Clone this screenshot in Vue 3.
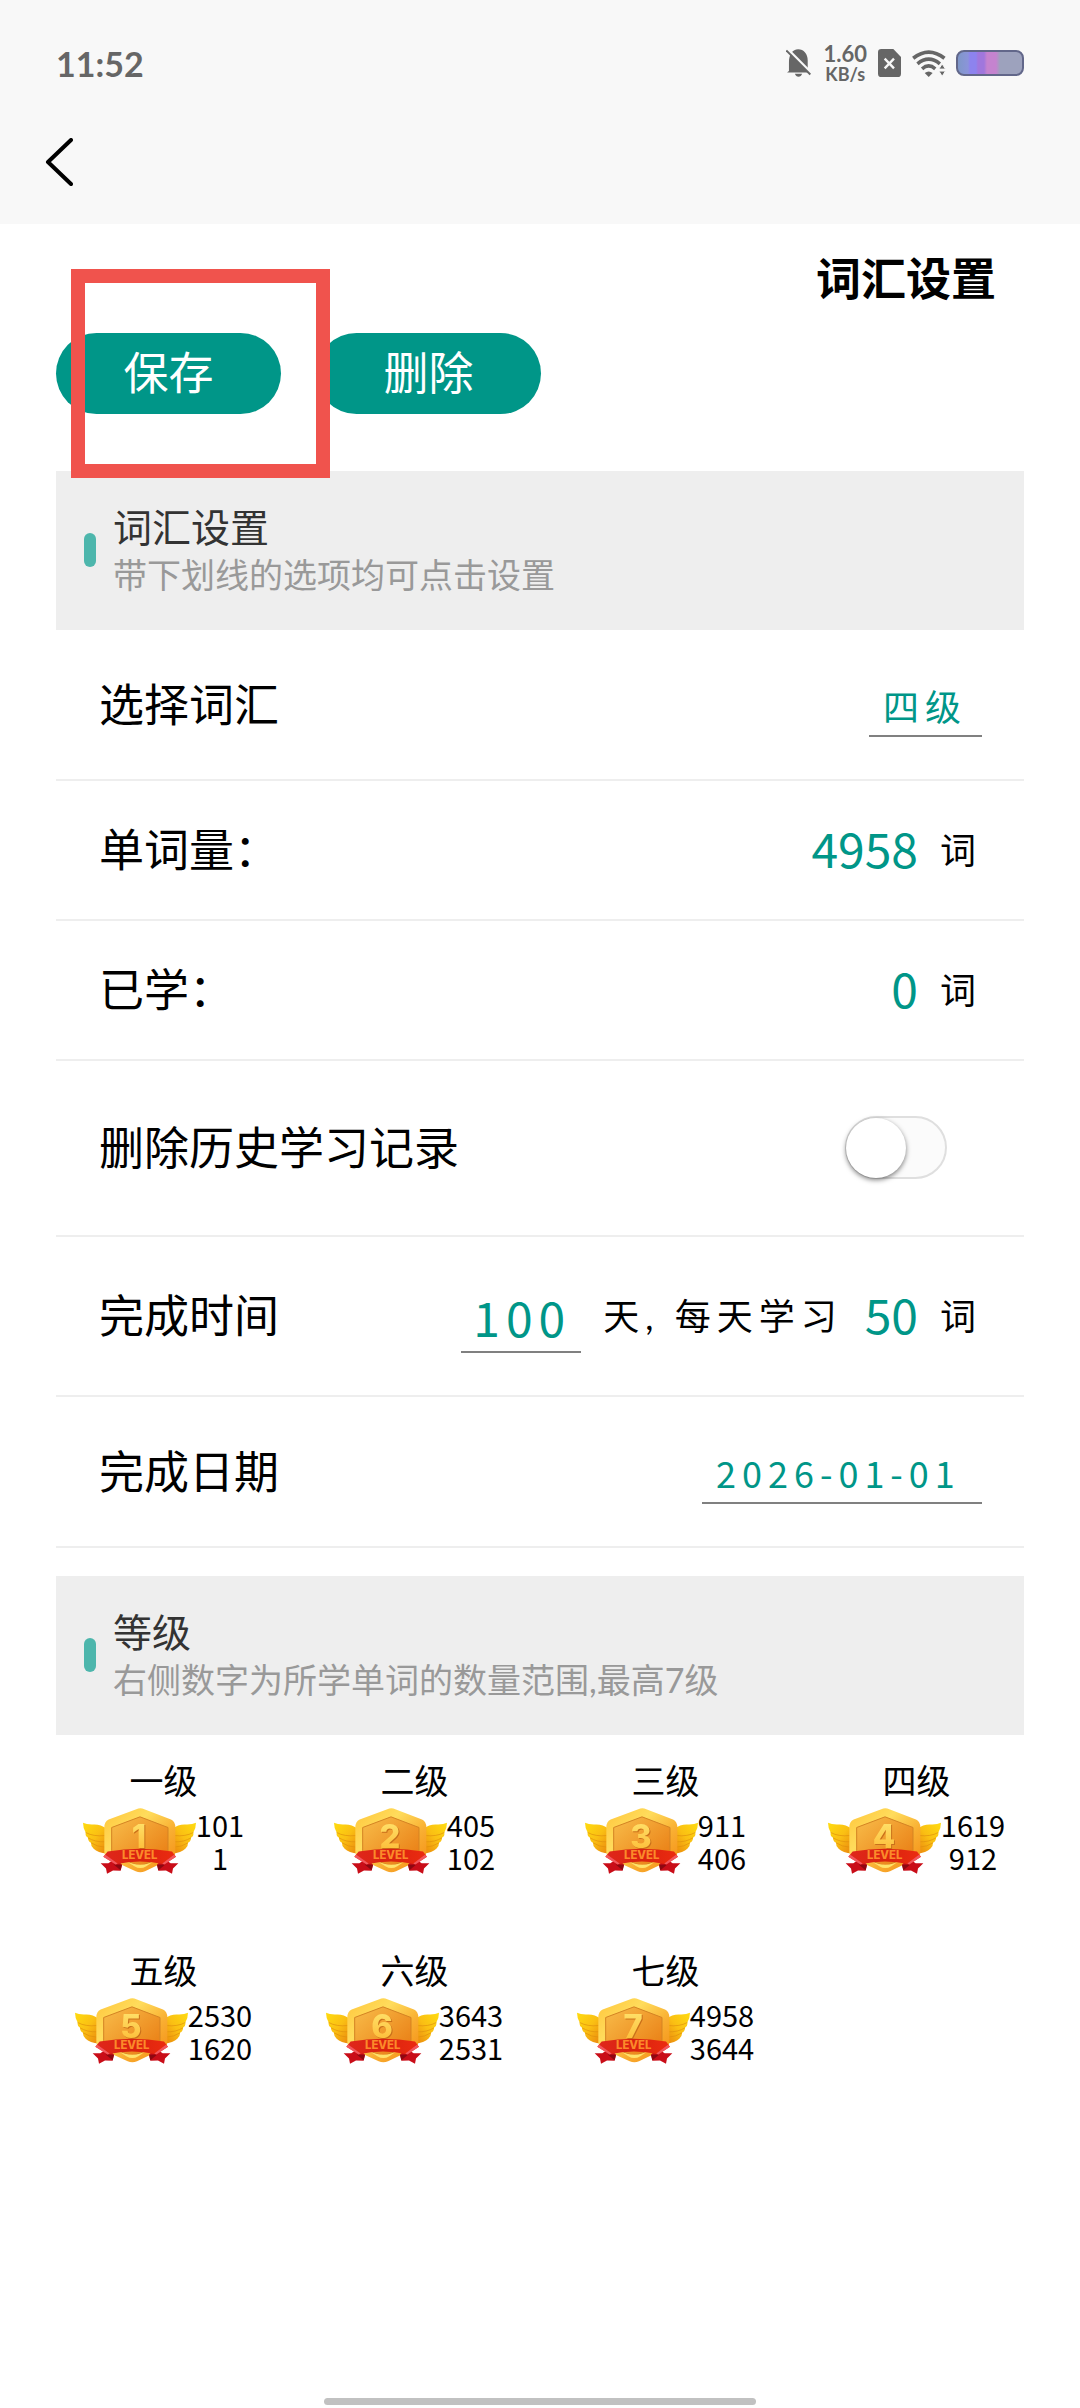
<script setup>
import { ref } from 'vue'

const vocab = ref('四级')
const days = ref('100')
const finishDate = ref('2026-01-01')
const clearHistory = ref(false)
const total = ref(4958)
const learned = ref(0)
const perDay = ref(50)

const levels = [
  { id: 1, name: '一级', max: 101, min: 1 },
  { id: 2, name: '二级', max: 405, min: 102 },
  { id: 3, name: '三级', max: 911, min: 406 },
  { id: 4, name: '四级', max: 1619, min: 912 },
  { id: 5, name: '五级', max: 2530, min: 1620 },
  { id: 6, name: '六级', max: 3643, min: 2531 },
  { id: 7, name: '七级', max: 4958, min: 3644 }
]
</script>

<template>
  <div class="page">
    <header class="top">
      <div class="status">
        <span class="time">11:52</span>
        <div class="status-icons">
          <svg class="bell" viewBox="0 0 76 84">
            <path d="M9 66V40C9 16 20 0 37 0s29 14 29 34v32l6 4v1H4v-1z" fill="#666" />
            <path d="M27 75h22c-2 6-6 9-11 9s-9-3-11-9z" fill="#666" />
            <path d="M5 0l74 74" stroke="#f8f8f8" stroke-width="8" />
            <path d="M1 4l73 73" stroke="#666" stroke-width="6" />
          </svg>
          <div class="speed">
            <span class="speed-num">1.60</span>
            <span class="speed-unit">KB/s</span>
          </div>
          <svg class="sim" viewBox="0 0 69 84">
            <path d="M10 0h36l23 24v50a10 10 0 0 1-10 10H10A10 10 0 0 1 0 74V10A10 10 0 0 1 10 0z" fill="#666" />
            <path d="M20 29l28 29M48 29L20 58" stroke="#f8f8f8" stroke-width="7" />
          </svg>
          <svg class="wifi" viewBox="0 0 102 82">
            <g fill="none" stroke="#666" stroke-width="11">
              <path d="M3 25Q50-12 98 25" />
              <path d="M16 42Q50 14 84 42" />
              <path d="M30 57Q50 40 70 57" />
            </g>
            <path d="M38 70q12-10 24 0L50 82z" fill="#666" />
            <path d="M91 42l10 16H81zM91 80l10-16H81z" fill="#666" stroke="#f8f8f8" stroke-width="3" />
          </svg>
          <div class="battery"></div>
        </div>
      </div>
      <nav class="nav">
        <button class="back" type="button" aria-label="返回">
          <svg viewBox="0 0 28 48">
            <path d="M26 2L3 24l23 22" fill="none" stroke="#000" stroke-width="4" stroke-linecap="round" stroke-linejoin="round" />
          </svg>
        </button>
      </nav>
    </header>

    <main class="content">
      <h1>词汇设置</h1>
      <div class="actions">
        <button type="button">保存</button>
        <button type="button">删除</button>
        <div class="mark"></div>
      </div>

      <section>
        <div class="section-head">
          <i class="pill"></i>
          <div>
            <h2>词汇设置</h2>
            <p>带下划线的选项均可点击设置</p>
          </div>
        </div>
        <div class="row">
          <label for="vocab">选择词汇</label>
          <select id="vocab" v-model="vocab" class="field vocab">
            <option v-for="l in levels" :key="l.id">{{ l.name }}</option>
          </select>
        </div>
        <div class="row">
          <span class="label">单词量：</span>
          <div class="value"><b>{{ total }}</b><span>词</span></div>
        </div>
        <div class="row">
          <span class="label">已学：</span>
          <div class="value"><b>{{ learned }}</b><span>词</span></div>
        </div>
        <div class="row row-switch">
          <label for="clear">删除历史学习记录</label>
          <input id="clear" v-model="clearHistory" class="switch" type="checkbox">
        </div>
        <div class="row">
          <label for="days">完成时间</label>
          <div class="value">
            <input id="days" v-model="days" class="field days" type="text">
            <span>天, 每天学习</span>
            <b>{{ perDay }}</b>
            <span>词</span>
          </div>
        </div>
        <div class="row">
          <label for="date">完成日期</label>
          <input id="date" v-model="finishDate" class="field date" type="text">
        </div>
      </section>

      <section class="grades">
        <div class="section-head">
          <i class="pill"></i>
          <div>
            <h2>等级</h2>
            <p>右侧数字为所学单词的数量范围,最高7级</p>
          </div>
        </div>

        <svg class="defs" aria-hidden="true">
          <defs>
            <linearGradient id="rim" x1="0" y1="0" x2="1" y2="1">
              <stop offset="0" stop-color="#ffc53a" />
              <stop offset=".35" stop-color="#ffdc5c" />
              <stop offset=".65" stop-color="#f9ae31" />
              <stop offset="1" stop-color="#f38b12" />
            </linearGradient>
            <linearGradient id="face" x1="0" y1="0" x2="1" y2="1">
              <stop offset="0" stop-color="#f8bd4a" />
              <stop offset="1" stop-color="#e8780f" />
            </linearGradient>
            <linearGradient id="wing" x1="0" y1="0" x2="1" y2="1">
              <stop offset="0" stop-color="#ffdc10" />
              <stop offset=".5" stop-color="#fabf13" />
              <stop offset="1" stop-color="#e9840c" />
            </linearGradient>
            <linearGradient id="digit" x1="0" y1="0" x2="0" y2="1">
              <stop offset="0" stop-color="#ffe873" />
              <stop offset="1" stop-color="#fdb62f" />
            </linearGradient>
            <linearGradient id="ribbon" x1="0" y1="0" x2="1" y2="0">
              <stop offset="0" stop-color="#e0271c" />
              <stop offset=".5" stop-color="#d9230f" />
              <stop offset="1" stop-color="#ec2b10" />
            </linearGradient>
            <g id="wing-shape">
              <path d="M0 44Q12 50 32 49Q52 48 72 62V136Q44 134 32 122Q23 114 24 104Q15 100 15 89Q6 84 8 73Q0 60 0 44z" fill="url(#wing)" />
              <path d="M8 73Q32 86 66 82M15 89Q36 102 66 101M24 104Q42 116 66 117" fill="none" stroke="#df8d0c" stroke-width="3" opacity=".65" />
            </g>
            <g id="tail-shape">
              <path d="M53 165L76 165L98 150L117 170L113 188L90 187L72 197L69 181z" fill="#c90d18" />
              <path d="M92 169L117 170L113 186z" fill="#8d0812" />
            </g>
          </defs>
        </svg>

        <ul class="levels">
          <li v-for="l in levels" :key="l.id">
            <span class="level-name">{{ l.name }}</span>
            <div class="level-body">
              <svg class="badge" viewBox="0 0 339 197">
                <use href="#wing-shape" />
                <use href="#wing-shape" transform="translate(339 0) scale(-1 1)" />
                <path d="M160 3Q172-3 184 3L264 34Q277 41 277 57V132Q277 145 264 152L186 189Q172 195 158 189L76 152Q64 145 64 132V57Q64 41 77 34z" fill="url(#rim)" />
                <path d="M171 26L255 58V128Q255 140 245 145L171 174L96 145Q86 140 86 128V58z" fill="url(#face)" stroke="#d48323" stroke-width="3" />
                <path d="M128 158Q150 170 172 170Q196 170 214 158L190 174Q172 185 154 174z" fill="#ffe36a" />
                <text x="168" y="120" class="digit">{{ l.id }}</text>
                <use href="#tail-shape" />
                <use href="#tail-shape" transform="translate(339 0) scale(-1 1)" />
                <path d="M74 130Q171 114 267 130L279 146L244 168Q171 152 98 168L61 146z" fill="url(#ribbon)" />
                <path d="M61 146L67 140L104 166L98 169zM279 146L273 140L238 166L244 169z" fill="#f2555c" />
                <text x="170" y="154" class="ribbon-text">LEVEL</text>
              </svg>
              <div class="range">
                <span>{{ l.max }}</span>
                <span>{{ l.min }}</span>
              </div>
            </div>
          </li>
        </ul>
      </section>
    </main>

    <div class="home-bar"></div>
  </div>
</template>

<style>
body {
  margin: 0;
  background: #fff;
}
</style>

<style scoped>
.page {
  min-height: 100vh;
  display: flex;
  flex-direction: column;
  font-family: Lato, "Noto Sans CJK SC", sans-serif;
  color: #000;
  background: #fff;
}
.page * {
  box-sizing: border-box;
}
button, input, select {
  font-family: inherit;
  margin: 0;
}

/* status bar + nav */
.top {
  background: #f8f8f8;
  padding: 0 56px 26px;
}
.status {
  height: 126px;
  display: flex;
  align-items: center;
  justify-content: space-between;
  color: #666;
}
.time {
  font-size: 34px;
  font-weight: 700;
}
.status-icons {
  display: flex;
  align-items: center;
}
.bell {
  width: 25px;
  height: 28px;
  margin-right: 12px;
}
.speed {
  display: flex;
  flex-direction: column;
  align-items: center;
  font-weight: 700;
  margin-right: 11px;
  padding-top: 2px;
}
.speed-num {
  font-size: 22px;
  line-height: 20px;
}
.speed-unit {
  font-size: 18px;
  line-height: 20px;
}
.sim {
  width: 23px;
  height: 28px;
  margin-right: 11px;
}
.wifi {
  width: 34px;
  height: 27px;
  margin-right: 10px;
}
.battery {
  width: 68px;
  height: 26px;
  border: 2px solid #62678a;
  border-radius: 8px;
  background: linear-gradient(90deg, #7f97c8 0, #8b94da 10px, #8d83ee 12px, #8d83ee 18px, #a077dd 20px, #a077dd 26px, #c583cf 29px, #c583cf 38px, #9da2bd 42px);
}
.nav {
  height: 72px;
  display: flex;
  align-items: center;
}
.back {
  width: 48px;
  height: 72px;
  margin-left: -11px;
  padding: 0;
  border: 0;
  background: none;
  display: flex;
  align-items: center;
}
.back svg {
  width: 28px;
  height: 48px;
}

/* title + buttons */
.content {
  padding: 24px 56px 0;
}
h1 {
  margin: 0 28px 23px 0;
  font-size: 45px;
  line-height: 62px;
  font-weight: 700;
  text-align: right;
}
.actions {
  position: relative;
  display: flex;
  gap: 35px;
  margin-bottom: 57px;
}
.actions button {
  width: 225px;
  height: 81px;
  padding: 0;
  border: 0;
  border-radius: 41px;
  background: #009688;
  color: #fff;
  font-size: 45px;
  line-height: 81px;
}
.mark {
  position: absolute;
  left: 15px;
  top: -64px;
  width: 259px;
  height: 209px;
  border: 14px solid #f0534d;
  pointer-events: none;
}

/* section header */
.section-head {
  display: flex;
  align-items: center;
  gap: 17px;
  padding: 31px 28px 32px;
  background: #eee;
}
.pill {
  width: 12px;
  height: 34px;
  border-radius: 6px;
  background: #4db6ac;
}
h2 {
  margin: 0;
  font-size: 39px;
  line-height: 50px;
  font-weight: 400;
  color: #333;
}
.section-head p {
  margin: 0;
  font-size: 34px;
  line-height: 46px;
  color: #999;
}

/* setting rows */
.row {
  display: flex;
  align-items: center;
  justify-content: space-between;
  padding: 42px 42px 42px 43px;
  border-bottom: 2px solid #eee;
}
.row label, .label {
  font-size: 45px;
  line-height: 54px;
}
.value {
  display: flex;
  align-items: center;
  gap: 22px;
}
.value b {
  font-family: "Noto Sans CJK SC", sans-serif;
  font-size: 48px;
  line-height: 48px;
  padding-bottom: 6px;
  font-weight: 400;
  color: #009688;
}
.value span {
  font-size: 36px;
  line-height: 54px;
  letter-spacing: 6px;
}
.field {
  appearance: none;
  border: 0;
  border-bottom: 2px solid #808080;
  border-radius: 0;
  outline: 0;
  background: none;
  color: #009688;
  font-family: "Noto Sans CJK SC", sans-serif;
  font-size: 36px;
  letter-spacing: 6px;
  height: 65px;
  padding: 2px 14px 0;
}
.vocab {
  width: 113px;
}
.days {
  width: 120px;
  height: 74px;
  padding: 2px 0 0 12px;
  font-size: 48px;
}
.date {
  width: 280px;
}
.row-switch {
  padding: 55px 77px 56px 43px;
}
.switch {
  appearance: none;
  width: 102px;
  height: 63px;
  border: 2px solid #dfdfdf;
  border-radius: 32px;
  background: #fbfbfb;
}
.switch::before {
  content: "";
  display: block;
  width: 60px;
  height: 60px;
  margin-left: -1px;
  border-radius: 50%;
  background: #fff;
  box-shadow: 0 2px 5px rgba(0, 0, 0, 0.5);
  transition: margin-left 0.2s;
}
.switch:checked {
  background: #009688;
}
.switch:checked::before {
  margin-left: 38px;
}

/* levels */
.grades {
  margin-top: 28px;
}
.defs {
  position: absolute;
  width: 0;
  height: 0;
}
.levels {
  list-style: none;
  display: grid;
  grid-template-columns: repeat(4, 1fr);
  margin: 23px -18px 0;
  padding: 0;
}
.levels li {
  display: flex;
  flex-direction: column;
  align-items: center;
  gap: 4px;
  padding-bottom: 74px;
}
.level-name {
  font-size: 34px;
  line-height: 46px;
}
.level-body {
  display: flex;
}
.badge {
  width: 113px;
  height: 66px;
}
.range {
  display: flex;
  flex-direction: column;
  align-items: center;
  font-family: "Noto Sans CJK SC", sans-serif;
  font-size: 29px;
  line-height: 33px;
}
.digit {
  font-family: Inter, sans-serif;
  font-size: 98px;
  font-weight: 800;
  text-anchor: middle;
  fill: url(#digit);
  filter: drop-shadow(3px 3px 1px #c9701a);
}
.ribbon-text {
  font-family: Inter, sans-serif;
  font-size: 34px;
  font-weight: 800;
  text-anchor: middle;
  fill: #fb8a2a;
}

.home-bar {
  width: 40%;
  height: 7px;
  margin: auto auto 3px;
  border-radius: 4px;
  background: #c1c1c1;
}
</style>
